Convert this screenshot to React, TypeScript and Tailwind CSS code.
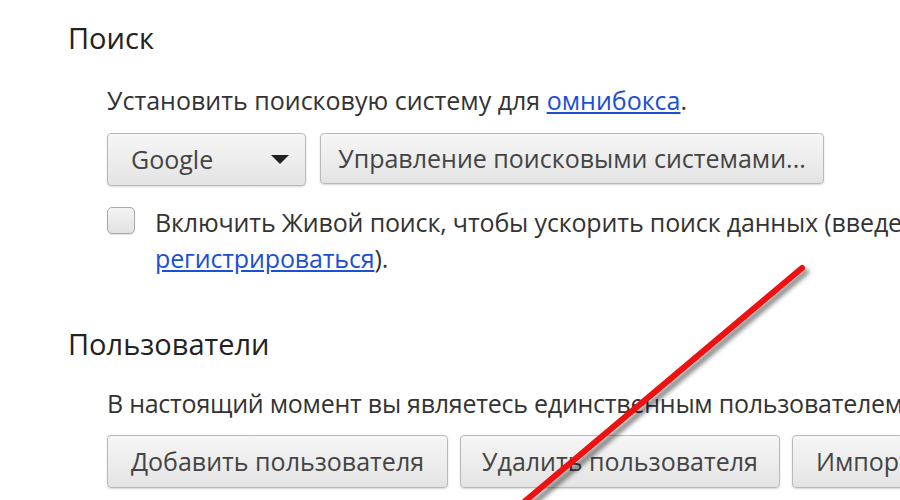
import React from "react";

const font = { fontFamily: '"Open Sans", "Noto Sans", sans-serif' };

function Btn({ children, className = "" }: { children: React.ReactNode; className?: string }) {
  return (
    <div
      className={
        "flex shrink-0 items-center whitespace-nowrap rounded-[4px] border border-[#b9b9b9] bg-gradient-to-b from-[#f6f6f6] to-[#e4e4e4] text-[25px] text-[#444] shadow-[0_1px_2px_rgba(0,0,0,0.15)] " +
        className
      }
    >
      {children}
    </div>
  );
}

export default function App() {
  return (
    <div className="relative h-[500px] w-[900px] overflow-hidden bg-white" style={font}>
      <div className="flex flex-col pl-[68px] pt-[18px]">
        <div className="text-[29px] leading-[40px] text-[#222]">Поиск</div>
        <div className="flex flex-col pl-[39px]">
          <div className="mt-[27px] whitespace-nowrap text-[25px] leading-[30px] text-[#333]">
            Установить поисковую систему для{" "}
            <span className="text-[#1a4fd6] underline">омнибокса</span>.
          </div>
          <div className="mt-[18px] flex gap-[14px]">
            <Btn className="h-[53px] w-[199px] justify-between pl-[23px] pr-[16px]">
              <span>Google</span>
              <svg width="18" height="10" viewBox="0 0 18 10">
                <path d="M0 0 L18 0 L9 9 Z" fill="#222" />
              </svg>
            </Btn>
            <Btn className="h-[51px] w-[504px] justify-center">Управление поисковыми системами...</Btn>
          </div>
          <div className="mt-[18px] flex items-start gap-[20px]">
            <div className="mt-[3px] h-[27px] w-[28px] shrink-0 rounded-[5px] border border-[#a9a9a9] bg-gradient-to-b from-[#f4f4f4] to-[#e2e2e2] shadow-[0_1px_1px_rgba(0,0,0,0.12)]" />
            <div className="whitespace-nowrap text-[25px] leading-[36px] tracking-[-0.15px] text-[#333]">
              Включить Живой поиск, чтобы ускорить поиск данных (введенные в адресную строку
              <br />
              <span className="text-[#1a4fd6] underline">регистрироваться</span>).
            </div>
          </div>
        </div>
        <div className="mt-[48px] text-[29px] leading-[40px] text-[#222]">Пользователи</div>
        <div className="flex flex-col pl-[39px]">
          <div className="mt-[24px] whitespace-nowrap text-[25px] leading-[30px] tracking-[-0.25px] text-[#333]">
            В настоящий момент вы являетесь единственным пользователем Google Chrome.
          </div>
          <div className="mt-[17px] flex gap-[12px]">
            <Btn className="h-[53px] w-[341px] justify-center">Добавить пользователя</Btn>
            <Btn className="h-[53px] w-[320px] justify-center">Удалить пользователя</Btn>
            <Btn className="h-[53px] w-[400px] justify-start pl-[23px]">Импортировать закладки</Btn>
          </div>
        </div>
      </div>
      <svg className="pointer-events-none absolute left-0 top-0" width="900" height="500" viewBox="0 0 900 500">
        <defs>
          <filter id="sh" x="-20%" y="-20%" width="140%" height="140%">
            <feGaussianBlur stdDeviation="2" />
          </filter>
        </defs>
        <line x1="806" y1="272" x2="530" y2="506" stroke="rgba(0,0,0,0.45)" strokeWidth="6" strokeLinecap="round" filter="url(#sh)" />
        <line x1="802" y1="268" x2="524" y2="502" stroke="#ee1111" strokeWidth="6" strokeLinecap="round" />
      </svg>
    </div>
  );
}
